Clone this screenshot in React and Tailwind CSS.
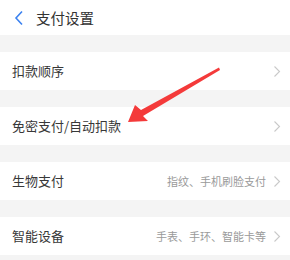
import React from 'react'

const rows = [
  { label: '扣款顺序' },
  { label: '免密支付/自动扣款' },
  { label: '生物支付', hint: '指纹、手机刷脸支付' },
  { label: '智能设备', hint: '手表、手环、智能卡等' },
]

function Chevron() {
  return (
    <svg width="8" height="13" viewBox="0 0 8 13" className="shrink-0">
      <path d="M1.5 1.5 L6.5 6.5 L1.5 11.5" fill="none" stroke="#c9c9c9" strokeWidth="1.1" />
    </svg>
  )
}

export default function App() {
  return (
    <div
      className="relative w-[290px] h-[260px] overflow-hidden bg-[#f4f4f4]"
      style={{ fontFamily: '"Noto Sans CJK SC", "Noto Sans", sans-serif' }}
    >
      <div className="h-[35px] bg-white flex items-center">
        <svg width="10" height="16" viewBox="0 0 10 16" className="ml-[14px]">
          <path d="M8 1.5 L2 8 L8 14.5" fill="none" stroke="#3b82f0" strokeWidth="1.6" />
        </svg>
        <span className="ml-[12px] text-[14.5px] text-[#333]">支付设置</span>
      </div>

      <div className="flex flex-col gap-[17px] pt-[17px]">
        {rows.map((r) => (
          <div key={r.label} className="h-[38px] bg-white flex items-center pl-[12px] pr-[9px]">
            <span className="text-[13px] text-[#383838] flex-1">{r.label}</span>
            {r.hint && <span className="text-[11px] text-[#9a9a9a] mr-[7px]">{r.hint}</span>}
            <Chevron />
          </div>
        ))}
      </div>

      <svg className="absolute left-0 top-0" width="290" height="260" viewBox="0 0 290 260">
        <polygon
          points="219,67.5 141,110 135,105 128,122 148,121 143,116 220,70"
          fill="#f43a3a"
        />
      </svg>
    </div>
  )
}
